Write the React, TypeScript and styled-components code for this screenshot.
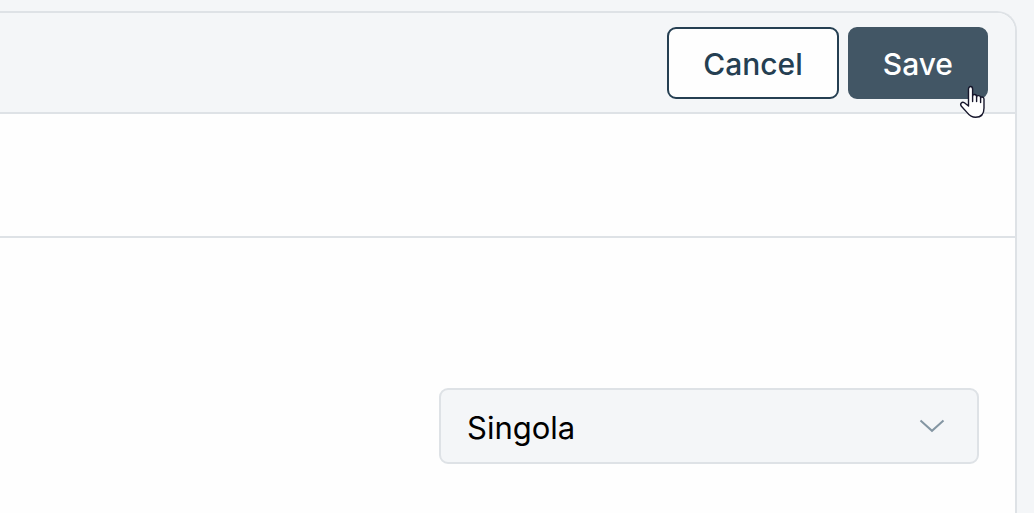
import React from "react";
import styled, { createGlobalStyle, css } from "styled-components";

const GlobalStyle = createGlobalStyle`
  *, *::before, *::after { box-sizing: border-box; }
  body {
    margin: 0;
    background: #f4f6f8;
    font-family: Inter, "Liberation Sans", sans-serif;
    overflow: hidden;
  }
`;

const Page = styled.main`
  display: flex;
  min-height: 100vh;
  padding: 11px 17px 0 0;
`;

const Panel = styled.section`
  flex: 1;
  display: flex;
  flex-direction: column;
  background: #fefefe;
  border: 2px solid #dee2e6;
  border-width: 2px 2px 0 0;
  border-top-right-radius: 20px;
`;

const Toolbar = styled.header`
  display: flex;
  justify-content: flex-end;
  gap: 9px;
  padding: 14px 27px 13px;
  background: #f4f6f8;
  border-bottom: 2px solid #dee2e6;
  border-top-right-radius: 18px;
`;

const Button = styled.button<{ $primary?: boolean }>`
  height: 72px;
  padding: 2px 34px 0;
  border: 2px solid #253f52;
  border-radius: 9px;
  background: #fefefe;
  color: #253f52;
  font: 500 30px/40px Inter, "Liberation Sans", sans-serif;
  cursor: pointer;
  ${(p) =>
    p.$primary &&
    css`
      padding: 2px 33px 0;
      border-color: #425665;
      background: #425665;
      color: #fff;
    `}
`;

const ButtonAnchor = styled.div`
  position: relative;
  display: flex;
`;

const Pointer = styled.svg`
  position: absolute;
  right: 2px;
  bottom: -20px;
  pointer-events: none;
`;

const Strip = styled.div`
  height: 124px;
  border-bottom: 2px solid #dee2e6;
`;

const Content = styled.div`
  display: flex;
  justify-content: flex-end;
  padding: 150px 36px 49px;
`;

const SelectWrap = styled.div`
  position: relative;
  width: 540px;
  max-width: 100%;
`;

const Select = styled.select`
  appearance: none;
  width: 100%;
  height: 76px;
  padding: 4px 80px 0 26px;
  border: 2px solid #dee2e6;
  border-radius: 9px;
  background: #f4f6f8;
  color: #000;
  font: 400 31px/40px Inter, "Liberation Sans", sans-serif;
`;

const Chevron = styled.svg`
  position: absolute;
  right: 34px;
  top: 31px;
  pointer-events: none;
`;

export default function App() {
  return (
    <Page>
      <GlobalStyle />
      <Panel>
        <Toolbar>
          <Button type="button">Cancel</Button>
          <ButtonAnchor>
            <Button type="button" $primary>
              Save
            </Button>
            <Pointer width="27" height="34" viewBox="0 0 27 34" aria-hidden="true">
              <path
                d="M9.5 21V4.2C9.5.6 13.6.6 13.6 4.2V11c0-2.2 4-2 4 .5v.5c0-2 4-1.8 4 .5v.5c.2-1.7 3.4-1.3 3.4 1V23c0 6-3 9.3-8.4 9.3-4.2 0-6.2-1.7-8.2-4.4L2.4 21.2c-2-2.6.7-5 3-3.4z"
                fill="#fff"
                stroke="#16162b"
                strokeWidth="1.4"
                strokeLinejoin="round"
              />
              <path d="M13.6 11v5.5M17.6 12v4.5M21.6 13v4.5" fill="none" stroke="#16162b" strokeWidth="1.4" strokeLinecap="round" />
            </Pointer>
          </ButtonAnchor>
        </Toolbar>
        <Strip />
        <Content>
          <SelectWrap>
            <Select aria-label="Type" defaultValue="Singola">
              <option>Singola</option>
            </Select>
            <Chevron width="26" height="15" viewBox="0 0 26 15" aria-hidden="true">
              <path d="M1.5 1.5 13 11.8 24.5 1.5" fill="none" stroke="#8496a3" strokeWidth="2" />
            </Chevron>
          </SelectWrap>
        </Content>
      </Panel>
    </Page>
  );
}
